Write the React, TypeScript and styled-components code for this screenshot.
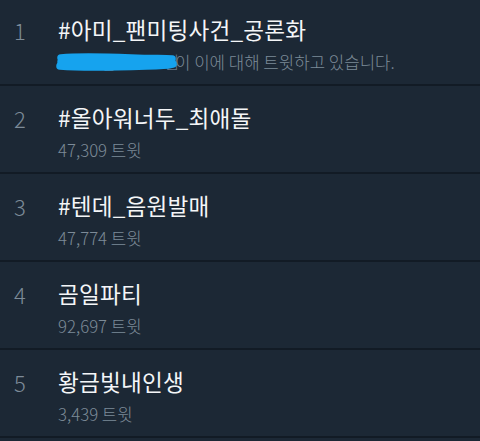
import React from 'react';
import styled, { createGlobalStyle } from 'styled-components';

const GlobalStyle = createGlobalStyle`
  html, body {
    margin: 0;
    padding: 0;
    background: #1c2835;
  }
  body {
    font-family: "Noto Sans CJK KR", "Noto Sans", sans-serif;
  }
`;

const List = styled.div`
  width: 480px;
  height: 441px;
  overflow: hidden;
  background: #1c2835;
`;

const Row = styled.div<{ first?: boolean }>`
  display: grid;
  grid-template-columns: 58px 1fr;
  height: ${({ first }) => (first ? 86 : 88)}px;
  box-sizing: border-box;
  padding-top: ${({ first }) => (first ? 14 : 16)}px;
  border-bottom: 2px solid #121b25;
`;

const Rank = styled.div`
  padding-left: 14px;
  font-size: 22px;
  font-weight: 300;
  line-height: 32px;
  color: #7d8b98;
`;

const Body = styled.div`
  display: flex;
  flex-direction: column;
`;

const Title = styled.div`
  font-size: 22.6px;
  font-weight: 400;
  line-height: 32px;
  color: #f4f6f8;
  letter-spacing: 0.2px;
`;

const Meta = styled.div`
  margin-top: 6px;
  font-size: 16.8px;
  font-weight: 300;
  line-height: 20px;
  color: #7d8b98;
  display: flex;
  align-items: center;
`;

const Hidden = styled.span`
  position: relative;
  display: inline-block;
  width: 117px;
  white-space: nowrap;
  overflow: visible;
  color: #6b7a88;
`;

const Scribble = styled.svg`
  position: absolute;
  left: -2px;
  top: -2px;
`;

type Trend = { title: string; meta: string };

const trends: Trend[] = [
  { title: '#아미_팬미팅사건_공론화', meta: '' },
  { title: '#올아워너두_최애돌', meta: '47,309 트윗' },
  { title: '#텐데_음원발매', meta: '47,774 트윗' },
  { title: '곰일파티', meta: '92,697 트윗' },
  { title: '황금빛내인생', meta: '3,439 트윗' },
];

export default function App() {
  return (
    <>
      <GlobalStyle />
      <List>
        {trends.map((t, i) => (
          <Row key={t.title} first={i === 0}>
            <Rank>{i + 1}</Rank>
            <Body>
              <Title>{t.title}</Title>
              {i === 0 ? (
                <Meta>
                  <Hidden>
                    ㅇㅇㅇ_ㅇㅇ ㅇ님
                    <Scribble width="124" height="24" viewBox="0 0 124 24">
                      <path
                        d="M5 8 C 25 6, 50 7, 75 8 S 108 8, 116 9 M4 16 C 30 18, 60 17, 90 16 S 110 15, 117 14 M5 12 L 116 12"
                        stroke="#16a3ee"
                        strokeWidth="7.5"
                        strokeLinecap="round"
                        fill="none"
                      />
                    </Scribble>
                  </Hidden>
                  이 이에 대해 트윗하고 있습니다.
                </Meta>
              ) : (
                <Meta>{t.meta}</Meta>
              )}
            </Body>
          </Row>
        ))}
      </List>
    </>
  );
}
